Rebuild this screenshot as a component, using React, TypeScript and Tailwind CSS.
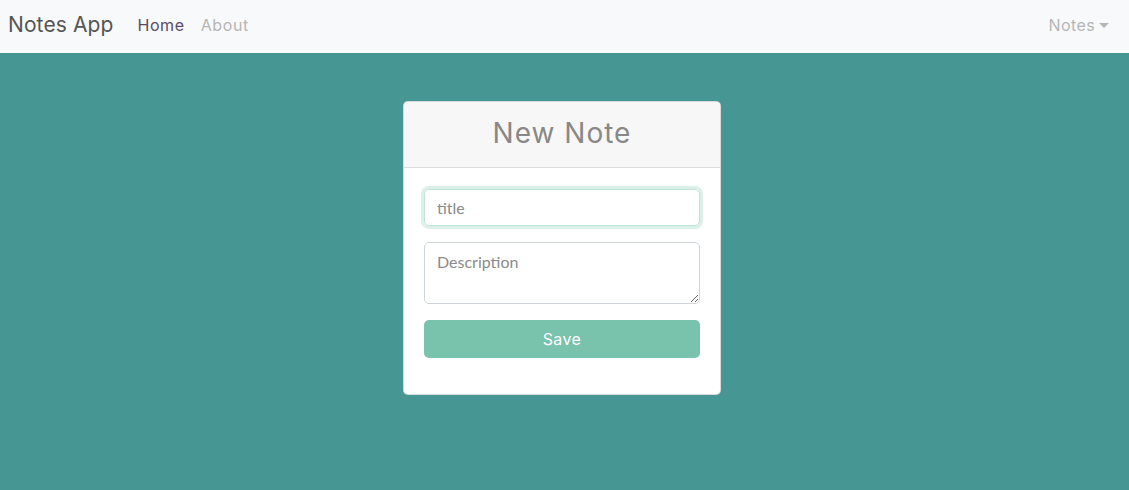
import React from 'react';

const App: React.FC = () => {
  return (
    <div className="min-h-screen bg-[#469694]" style={{ height: 490 }}>
      {/* Navbar */}
      <nav className="h-[53px] bg-[#f8f9fa] flex items-center pl-2 pr-5 pb-[4px] font-['Inter',sans-serif]">
        <a className="text-[21px] text-[#555] mr-6 tracking-[0.1px]">Notes App</a>
        <div className="flex items-center gap-4 text-[16px] tracking-[0.6px]">
          <a className="text-[#5a4a66]">Home</a>
          <a className="text-[#b5b5b5]">About</a>
        </div>
        <div className="ml-auto flex items-center gap-1 text-[16px] tracking-[0.4px] text-[#b5b5b5]">
          <span>Notes</span>
          <span className="w-0 h-0 border-l-[5px] border-r-[5px] border-t-[5px] border-l-transparent border-r-transparent border-t-[#b5b5b5] mt-[1px]"></span>
        </div>
      </nav>

      {/* Card */}
      <div className="flex justify-center pt-12 pr-[5px]">
        <div className="w-[318px] bg-white border border-black/15 rounded-[5px] overflow-hidden">
          <div className="h-[66px] bg-[#f7f7f7] border-b border-[#dcdcdc] flex items-center justify-center pb-[4px]">
            <h2 className="text-[28px] tracking-[1px] text-[#888] font-['Inter',sans-serif]">New Note</h2>
          </div>
          <div className="p-5 pt-[21px] pb-[36px] flex flex-col gap-4 font-['Lato',sans-serif]">
            <input
              placeholder="title"
              className="h-[37px] w-full rounded-[5px] border border-[#bfe3d7] px-3 text-[16px] text-[#555] placeholder:text-[#8a8a8a] outline-none ring-[3px] ring-[#dcf0ea]"
            />
            <textarea
              placeholder="Description"
              rows={2}
              className="h-[62px] w-full rounded-[5px] border border-[#ced4da] px-3 py-[7px] text-[16px] placeholder:text-[#8a8a8a] outline-none"
            />
            <button className="h-[38px] w-full rounded-[5px] bg-[#79c2ac] text-white text-[16px] tracking-[0.4px] font-['Inter',sans-serif]">
              Save
            </button>
          </div>
        </div>
      </div>
    </div>
  );
};

export default App;
